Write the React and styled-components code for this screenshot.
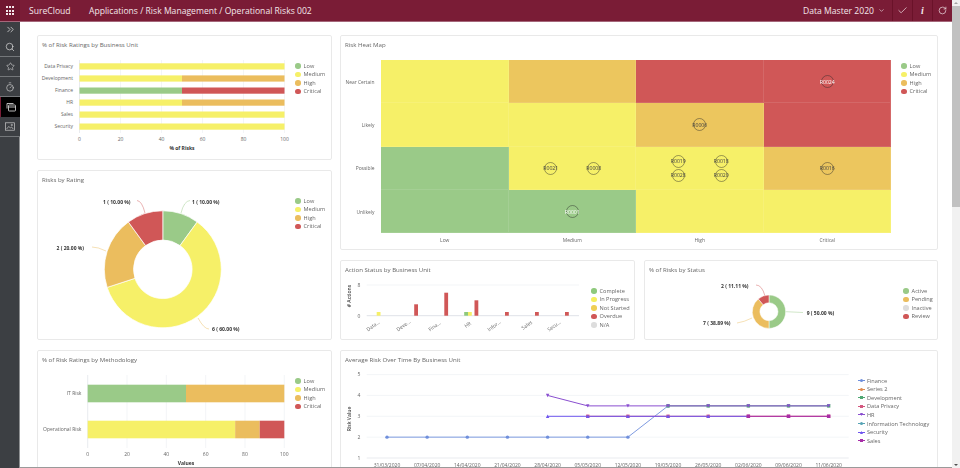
import React from "react";
import styled, { createGlobalStyle } from "styled-components";
import { Check, ChevronDown, ChevronsRight, RotateCw, Search, Star, Timer } from "lucide-react";

const GlobalStyle = createGlobalStyle`
  html, body {
    margin: 0;
    height: 100%;
    overflow: hidden;
    background: #fff;
    font-family: "Open Sans", "Liberation Sans", sans-serif;
  }
`;

const Page = styled.div`
  display: flex;
  width: 960px;
  height: 468px;
  overflow: hidden;
  filter: blur(0.3px);
`;

const Content = styled.div`
  display: flex;
  flex-direction: column;
  width: 952px;
`;

const Topbar = styled.header`
  display: flex;
  align-items: center;
  flex: 0 0 22px;
  background: #7a1c36;
  border-bottom: 1px solid #a5677a;
  box-sizing: border-box;
  color: #f3e6ea;
`;

const Waffle = styled.div`
  display: grid;
  grid-template-columns: repeat(3, 2px);
  gap: 1.2px;
  justify-content: center;
  align-content: center;
  width: 20px;
  height: 21px;
  background: #701730;
  span {
    background: #f3e6ea;
    height: 2px;
  }
`;

const Brand = styled.div`
  width: 59px;
  padding-left: 9px;
  font-size: 8.6px;
  box-sizing: border-box;
`;

const Crumbs = styled.div`
  flex: 1;
  padding-left: 10px;
  font-size: 8.6px;
`;

const Period = styled.div`
  display: flex;
  align-items: center;
  gap: 4px;
  width: 89px;
  font-size: 8.6px;
`;

const BarButton = styled.div`
  display: flex;
  align-items: center;
  justify-content: center;
  width: 20px;
  height: 21px;
  border-left: 1px solid #6a1229;
  box-sizing: border-box;
  font: italic 700 10px "Liberation Serif", serif;
`;

const Lower = styled.div`
  display: flex;
  flex: 1;
  min-height: 0;
`;

const Sidebar = styled.nav`
  display: flex;
  flex-direction: column;
  flex: 0 0 20px;
  background: #3c3f43;
  color: #e4e4e4;
`;

const SideItem = styled.div`
  display: flex;
  align-items: center;
  justify-content: center;
  height: ${(p) => p.$h || 20}px;
  border-bottom: ${(p) => (p.$plain ? "none" : "1px solid #74777a")};
  box-sizing: border-box;
  background: ${(p) => (p.$active ? "#000" : "transparent")};
  border-left: ${(p) => (p.$active ? "1.5px solid #7a1c36" : "none")};
`;

const SideFill = styled.div`
  flex: 1;
  border-right: 1px solid #8f9193;
`;

const Main = styled.main`
  display: grid;
  grid-template-columns: 295px 598px;
  column-gap: 8px;
  align-items: start;
  flex: 1;
  padding: 13px 0 0 17px;
  overflow: hidden;
  border-bottom: 1px solid #9a9a9a;
`;

const Column = styled.div`
  display: flex;
  flex-direction: column;
  gap: 10px;
`;

const Row = styled.div`
  display: flex;
  gap: 9px;
`;

const Card = styled.section`
  flex: 0 0 auto;
  width: ${(p) => p.$w || 295}px;
  height: ${(p) => p.$h}px;
  box-sizing: border-box;
  border: 1px solid #e9e9e9;
  border-radius: 2px;
  background: #fff;
`;

const Title = styled.h3`
  margin: 0;
  height: 19px;
  padding-left: 4px;
  font-size: 6.1px;
  font-weight: 400;
  line-height: 18px;
  color: #666;
`;

const Body = styled.div`
  display: flex;
  align-items: flex-start;
`;

const Legend = styled.ul`
  list-style: none;
  margin: 6.5px 0 0;
  padding: 0 0 0 ${(p) => p.$left || 2}px;
`;

const LegendRow = styled.li`
  display: flex;
  align-items: center;
  gap: ${(p) => p.$gap || 3}px;
  height: 8.55px;
  font-size: 5.6px;
  color: #666;
  white-space: nowrap;
`;

const Dot = styled.i`
  width: 5.6px;
  height: 5.6px;
  border-radius: 50%;
  background: ${(p) => p.$color};
`;

const HeatGrid = styled.div`
  display: grid;
  grid-template-columns: 40px repeat(4, 127.5px);
  grid-template-rows: repeat(4, 43.33px) 14px;
  margin-top: 5px;
  width: 550px;
  flex: 0 0 550px;
`;

const AxisLabel = styled.div`
  display: flex;
  align-items: center;
  justify-content: ${(p) => (p.$center ? "center" : "flex-end")};
  padding-right: ${(p) => (p.$center ? 0 : 6.5)}px;
  font-size: 4.9px;
  color: #666;
  white-space: nowrap;
`;

const Cell = styled.div`
  display: grid;
  grid-template-columns: repeat(${(p) => p.$cols}, 13px);
  column-gap: 30px;
  row-gap: 1px;
  justify-content: center;
  align-content: center;
  background: ${(p) => p.$color};
  box-shadow: inset -1px -1px 0 rgba(255, 255, 255, 0.1);
`;

const Marker = styled.div`
  display: flex;
  align-items: center;
  justify-content: center;
  width: 13px;
  height: 13px;
  box-sizing: border-box;
  border: 0.5px solid rgba(40, 40, 40, 0.45);
  border-radius: 50%;
  font-size: 5.2px;
  white-space: nowrap;
  color: ${(p) => (p.$light ? "#fff" : "#444")};
`;

const Scrollbar = styled.div`
  display: flex;
  flex-direction: column;
  align-items: center;
  flex: 0 0 8px;
  background: #f1f1f1;
`;

const Arrow = styled.i`
  width: 0;
  height: 0;
  margin: 2px 0;
  border-left: 2px solid transparent;
  border-right: 2px solid transparent;
  ${(p) => (p.$down ? "border-top: 2px solid #505050;" : "border-bottom: 2px solid #a3a3a3;")}
`;

const Thumb = styled.div`
  width: 100%;
  height: 201px;
  background: #c1c1c1;
`;

const Spacer = styled.div`
  flex: 1;
`;

const Chart = styled.svg`
  flex: 0 0 auto;
  display: block;
  overflow: hidden;
  text {
    font-family: "Open Sans", "Liberation Sans", sans-serif;
    font-size: 5px;
    fill: #666;
  }
  text.bold {
    font-weight: 700;
    fill: #333;
  }
  text.name {
    font-weight: 600;
    fill: #444;
  }
`;

const GREEN = "#9aca88";
const YELLOW = "#f6f068";
const AMBER = "#ebbd5e";
const RED = "#d05757";
const HEAT_AMBER = "#ecc65e";
const GRID = "#eef0f4";

const RATINGS = [
  ["Low", GREEN],
  ["Medium", YELLOW],
  ["High", AMBER],
  ["Critical", RED],
];

const Plot = ({ x, y, w, h, children }) => (
  <Chart width={w} height={h} viewBox={`${x} ${y} ${w} ${h}`}>
    {children}
  </Chart>
);

const KeyList = ({ items, left }) => (
  <Legend $left={left}>
    {items.map(([label, color]) => (
      <LegendRow key={label}>
        <Dot $color={color} />
        {label}
      </LegendRow>
    ))}
  </Legend>
);

const BarChart = ({ rows, scale, ticks, tickY, top, bottom, axisName, axisY, labelX }) => (
  <>
    {ticks.map((t) => (
      <g key={t}>
        <line x1={scale(t)} x2={scale(t)} y1={top} y2={bottom} stroke={t === 0 ? "#dfe2e8" : GRID} strokeWidth="0.7" />
        <text x={scale(t)} y={tickY} textAnchor="middle">
          {t}
        </text>
      </g>
    ))}
    {rows.map((r) => {
      let at = 0;
      return (
        <g key={r.name}>
          <text x={labelX} y={r.y + r.h / 2 + 1.7} textAnchor="end">
            {r.name}
          </text>
          {r.parts.map(([value, color], i) => {
            const from = at;
            at += value;
            return <rect key={i} x={scale(from)} y={r.y} width={scale(at) - scale(from)} height={r.h} fill={color} />;
          })}
        </g>
      );
    })}
    <text className="bold" x={scale(50)} y={axisY} textAnchor="middle">
      {axisName}
    </text>
  </>
);

const polar = (cx, cy, r, f) => {
  const a = f * 2 * Math.PI - Math.PI / 2;
  return [cx + r * Math.cos(a), cy + r * Math.sin(a)];
};

const Donut = ({ cx, cy, R, r, slices, gap = 0.7 }) => {
  let at = 0;
  return slices.map(([value, color]) => {
    const from = at;
    at += value;
    const [x0, y0] = polar(cx, cy, R, from);
    const [x1, y1] = polar(cx, cy, R, at);
    const [x2, y2] = polar(cx, cy, r, at);
    const [x3, y3] = polar(cx, cy, r, from);
    const big = value > 0.5 ? 1 : 0;
    return (
      <path
        key={color}
        d={`M${x0} ${y0}A${R} ${R} 0 ${big} 1 ${x1} ${y1}L${x2} ${y2}A${r} ${r} 0 ${big} 0 ${x3} ${y3}Z`}
        fill={color}
        stroke="#fff"
        strokeWidth={gap}
      />
    );
  });
};

const Leader = ({ d, color }) => <path d={d} fill="none" stroke={color} strokeWidth="0.7" opacity="0.65" />;

const heatRows = [
  { name: "Near Certain", cells: [[YELLOW], [HEAT_AMBER], [RED], [RED, ["R0024"], true]] },
  { name: "Likely", cells: [[YELLOW], [YELLOW], [HEAT_AMBER, ["R0006"]], [RED]] },
  {
    name: "Possible",
    cells: [
      [GREEN],
      [YELLOW, ["R0021", "R0008"]],
      [YELLOW, ["R0019", "R0018", "R0028", "R0020"]],
      [HEAT_AMBER, ["R0016"]],
    ],
  },
  { name: "Unlikely", cells: [[GREEN], [GREEN, ["R0001"], true], [YELLOW], [YELLOW]] },
];

const HeatMap = () => (
  <HeatGrid>
    {heatRows.map((row) => (
      <React.Fragment key={row.name}>
        <AxisLabel>{row.name}</AxisLabel>
        {row.cells.map(([color, risks = [], light], i) => (
          <Cell key={i} $color={color} $cols={Math.min(risks.length || 1, 2)}>
            {risks.map((id) => (
              <Marker key={id} $light={light}>
                {id}
              </Marker>
            ))}
          </Cell>
        ))}
      </React.Fragment>
    ))}
    <span />
    {["Low", "Medium", "High", "Critical"].map((name) => (
      <AxisLabel key={name} $center>
        {name}
      </AxisLabel>
    ))}
  </HeatGrid>
);

const actionBars = [
  { x: 376.7, top: 312, color: YELLOW },
  { x: 414.2, top: 304.3, color: RED },
  { x: 444.3, top: 292.7, color: RED },
  { x: 464.2, top: 312, color: "#8ec97c" },
  { x: 468, top: 312, color: YELLOW },
  { x: 474.5, top: 300.3, color: RED },
  { x: 505, top: 312, color: RED },
  { x: 535, top: 312, color: RED },
  { x: 565, top: 312, color: RED },
];

const actionNames = [
  ["Data...", 368, 331.5],
  ["Deve...", 398, 331.5],
  ["Fina...", 430, 331.5],
  ["HR", 466, 328],
  ["Infor...", 489, 331.5],
  ["Sales", 523, 330],
  ["Secu...", 549, 331.5],
];

const weekLabels = [
  "31/03/2020",
  "07/04/2020",
  "14/04/2020",
  "21/04/2020",
  "28/04/2020",
  "05/05/2020",
  "12/05/2020",
  "19/05/2020",
  "26/05/2020",
  "02/06/2020",
  "09/06/2020",
  "11/06/2020",
];

const weekX = (i) => 387 + i * 40.15;
const valueY = (v) => 458 - (v - 1) * 20.85;

const series = [
  { name: "Finance", color: "#6f8fdc", from: 0, values: [2, 2, 2, 2, 2, 2, 2, 3.5], shape: "circle" },
  { name: "Series 2", color: "#e08a4f", from: 0, values: [], shape: "circle" },
  { name: "Development", color: "#4fa873", from: 7, values: [3.5, 3.5, 3.5, 3.5, 3.5], shape: "square" },
  { name: "Data Privacy", color: "#d4587f", from: 5, values: [3, 3, 3, 3, 3, 3, 3], shape: "square" },
  { name: "HR", color: "#8a4fd0", from: 4, values: [4, 3.5, 3.5, 3.5, 3.5, 3.5, 3.5, 3.5], shape: "down" },
  { name: "Information Technology", color: "#56a3b5", from: 0, values: [], shape: "circle" },
  { name: "Security", color: "#6f55ee", from: 4, values: [3, 3, 3, 3, 3, 3], shape: "up" },
  { name: "Sales", color: "#a82ea8", from: 9, values: [3, 3, 3], shape: "square" },
];

// point marker of a line series, centred on x,y
const Point = ({ shape, x, y, color, size = 1.7 }) => {
  if (shape === "square") {
    return <rect x={x - size} y={y - size} width={size * 2} height={size * 2} fill={color} />;
  }
  if (shape === "down") {
    return <path d={`M${x - size} ${y - size}h${size * 2}L${x} ${y + size}Z`} fill={color} />;
  }
  if (shape === "up") {
    return <path d={`M${x - size} ${y + size}h${size * 2}L${x} ${y - size}Z`} fill={color} />;
  }
  return <circle cx={x} cy={y} r={size} fill={color} />;
};

const LineChart = () => (
  <Plot x={341} y={370} w={515} h={97}>
    {[5, 4, 3, 2, 1].map((v) => (
      <g key={v}>
        <line x1="366.7" x2="848.7" y1={valueY(v)} y2={valueY(v)} stroke={v === 1 ? "#dfe2e8" : GRID} strokeWidth="0.7" />
        <text x="359" y={valueY(v) + 1.7} textAnchor="middle">
          {v}
        </text>
      </g>
    ))}
    <text className="name" transform="translate(350.5 419) rotate(-90)" textAnchor="middle">
      Risk Value
    </text>
    {weekLabels.map((label, i) => (
      <text key={label} x={weekX(i)} y="467" textAnchor="middle">
        {label}
      </text>
    ))}
    {series
      .filter((s) => s.values.length)
      .map((s) => (
        <g key={s.name}>
          <polyline
            points={s.values.map((v, i) => `${weekX(s.from + i)},${valueY(v)}`).join(" ")}
            fill="none"
            stroke={s.color}
            strokeWidth={s.name === "Finance" ? 0.9 : 1}
          />
          {s.values.map((v, i) => (
            <Point key={i} shape={s.shape} x={weekX(s.from + i)} y={valueY(v)} color={s.color} />
          ))}
        </g>
      ))}
  </Plot>
);

const LineKey = ({ shape, color }) => (
  <svg width="7" height="5" viewBox="0 0 7 5">
    <line x1="0" x2="7" y1="2.5" y2="2.5" stroke={color} strokeWidth="1" />
    <Point shape={shape} x={3.5} y={2.5} color={color} size={1.5} />
  </svg>
);

const WindowsIcon = () => (
  <svg width="10" height="10" viewBox="0 0 10 10" fill="none" stroke="#e4e4e4" strokeWidth="0.8">
    <path d="M1 6.5V1.5h6.5" />
    <rect x="2.5" y="3" width="7" height="6" rx="0.6" />
    <path d="M2.5 5h7" />
  </svg>
);

const PictureIcon = () => (
  <svg width="10" height="9" viewBox="0 0 10 9" fill="none" stroke="#c9c9c9" strokeWidth="0.7">
    <rect x="0.6" y="0.8" width="8.8" height="7.4" />
    <path d="M1.6 7l2.2-2.6 1.6 1.6 1.2-1 1.6 2" />
    <circle cx="6.8" cy="3" r="0.7" />
  </svg>
);

export default function App() {
  return (
    <Page>
      <GlobalStyle />
      <Content>
        <Topbar>
          <Waffle>
            {Array.from({ length: 9 }, (_, i) => (
              <span key={i} />
            ))}
          </Waffle>
          <Brand>SureCloud</Brand>
          <Crumbs>Applications / Risk Management / Operational Risks 002</Crumbs>
          <Period>
            Data Master 2020
            <ChevronDown size={7} />
          </Period>
          <BarButton>
            <Check size={11} strokeWidth={1.5} />
          </BarButton>
          <BarButton>i</BarButton>
          <BarButton>
            <RotateCw size={9} strokeWidth={1.8} />
          </BarButton>
        </Topbar>
        <Lower>
          <Sidebar>
            <SideItem $h={15} $plain>
              <ChevronsRight size={11} strokeWidth={1.6} />
            </SideItem>
            <SideItem $h={20}>
              <Search size={10} strokeWidth={1.6} />
            </SideItem>
            <SideItem>
              <Star size={9} strokeWidth={1.4} />
            </SideItem>
            <SideItem>
              <Timer size={10} strokeWidth={1.4} />
            </SideItem>
            <SideItem $active $plain>
              <WindowsIcon />
            </SideItem>
            <SideItem>
              <PictureIcon />
            </SideItem>
            <SideFill />
          </Sidebar>
          <Main>
            <Column>
              <Card $h={125}>
                <Title>% of Risk Ratings by Business Unit</Title>
                <Body>
                  <Plot x={38} y={55} w={255} h={104}>
                    <BarChart
                      scale={(v) => 79.5 + v * 2.05}
                      ticks={[0, 20, 40, 60, 80, 100]}
                      tickY={141}
                      top={60}
                      bottom={133}
                      labelX={73}
                      axisName="% of Risks"
                      axisY={150}
                      rows={[
                        { name: "Data Privacy", y: 63.3, h: 6.2, parts: [[100, YELLOW]] },
                        { name: "Development", y: 75.4, h: 6.2, parts: [[50, YELLOW], [50, AMBER]] },
                        { name: "Finance", y: 87.5, h: 6.2, parts: [[50, GREEN], [50, RED]] },
                        { name: "HR", y: 99.5, h: 6.2, parts: [[50, YELLOW], [50, AMBER]] },
                        { name: "Sales", y: 111.5, h: 6.2, parts: [[100, YELLOW]] },
                        { name: "Security", y: 123.5, h: 6.2, parts: [[100, YELLOW]] },
                      ]}
                    />
                  </Plot>
                  <KeyList items={RATINGS} />
                </Body>
              </Card>
              <Card $h={170}>
                <Title>Risks by Rating</Title>
                <Body>
                  <Plot x={38} y={190} w={255} h={149}>
                    <Leader d="M181 213Q184 201 190 200.5" color={GREEN} />
                    <Leader d="M145 213Q142 201 137 200.5" color={RED} />
                    <Leader d="M106 251Q98 247 92 247" color={AMBER} />
                    <Leader d="M198 318Q204 329 209 329" color={AMBER} />
                    <Donut
                      cx={162.8}
                      cy={269.3}
                      R={58.5}
                      r={29.3}
                      slices={[[0.1, GREEN], [0.6, YELLOW], [0.2, AMBER], [0.1, RED]]}
                    />
                    <text className="bold" x="192" y="203.5">1 ( 10.00 %)</text>
                    <text className="bold" x="103" y="203.5">1 ( 10.00 %)</text>
                    <text className="bold" x="56.5" y="249.5">2 ( 20.00 %)</text>
                    <text className="bold" x="212" y="330.5">6 ( 60.00 %)</text>
                  </Plot>
                  <KeyList items={RATINGS} />
                </Body>
              </Card>
              <Card $h={200}>
                <Title>% of Risk Ratings by Methodology</Title>
                <Body>
                  <Plot x={38} y={370} w={255} h={97}>
                    <BarChart
                      scale={(v) => 87.7 + v * 1.966}
                      ticks={[0, 20, 40, 60, 80, 100]}
                      tickY={456}
                      top={375}
                      bottom={448}
                      labelX={81.5}
                      axisName="Values"
                      axisY={465}
                      rows={[
                        { name: "IT Risk", y: 384.7, h: 17.6, parts: [[50, GREEN], [50, AMBER]] },
                        { name: "Operational Risk", y: 420.7, h: 17.6, parts: [[75, YELLOW], [12.5, AMBER], [12.5, RED]] },
                      ]}
                    />
                  </Plot>
                  <KeyList items={RATINGS} />
                </Body>
              </Card>
            </Column>
            <Column>
              <Card $w={598} $h={215}>
                <Title>Risk Heat Map</Title>
                <Body>
                  <HeatMap />
                  <KeyList items={RATINGS} left={10} />
                </Body>
              </Card>
              <Row>
                <Card $h={80}>
                  <Title>Action Status by Business Unit</Title>
                  <Body>
                    <Plot x={341} y={280} w={248} h={59}>
                      <line x1="366.7" x2="579" y1="285" y2="285" stroke={GRID} strokeWidth="0.7" />
                      <line x1="366.7" x2="579" y1="315.7" y2="315.7" stroke="#dfe2e8" strokeWidth="1" />
                      <text x="359" y="286.8" textAnchor="middle">8</text>
                      <text x="359" y="317.5" textAnchor="middle">0</text>
                      <text className="name" transform="translate(351 296) rotate(-90)" textAnchor="middle">
                        # Actions
                      </text>
                      {actionBars.map((b) => (
                        <rect key={`${b.x}`} x={b.x} y={b.top} width="3.8" height={315.7 - b.top} fill={b.color} />
                      ))}
                      {actionNames.map(([name, x, y]) => (
                        <text key={name} transform={`translate(${x} ${y}) rotate(-35)`}>
                          {name}
                        </text>
                      ))}
                    </Plot>
                    <KeyList
                      items={[
                        ["Complete", "#8ec97c"],
                        ["In Progress", "#f5ef5e"],
                        ["Not Started", "#efcf55"],
                        ["Overdue", RED],
                        ["N/A", "#dddddd"],
                      ]}
                    />
                  </Body>
                </Card>
                <Card $w={294} $h={80}>
                  <Title>% of Risks by Status</Title>
                  <Body>
                    <Plot x={645} y={280} w={256} h={59}>
                      <Leader d="M765 296Q762 285 756 285" color={RED} />
                      <Leader d="M752 318Q744 322 737 323" color={AMBER} />
                      <Leader d="M786 311.7L803 312.5" color={GREEN} />
                      <Donut
                        cx={769}
                        cy={311.7}
                        R={16.7}
                        r={9}
                        gap={0.5}
                        slices={[[0.5, GREEN], [0.3889, AMBER], [0.1111, RED]]}
                      />
                      <text className="bold" x="721" y="287.8">2 ( 11.11 %)</text>
                      <text className="bold" x="703" y="324.8">7 ( 38.89 %)</text>
                      <text className="bold" x="806.7" y="314.8">9 ( 50.00 %)</text>
                    </Plot>
                    <KeyList
                      items={[
                        ["Active", GREEN],
                        ["Pending", AMBER],
                        ["Inactive", "#dddddd"],
                        ["Review", RED],
                      ]}
                    />
                  </Body>
                </Card>
              </Row>
              <Card $w={598} $h={200}>
                <Title>Average Risk Over Time By Business Unit</Title>
                <Body>
                  <LineChart />
                  <Legend $left={1.5}>
                    {series.map((s) => (
                      <LegendRow key={s.name} $gap={2.5}>
                        <LineKey shape={s.shape} color={s.color} />
                        {s.name}
                      </LegendRow>
                    ))}
                  </Legend>
                </Body>
              </Card>
            </Column>
          </Main>
        </Lower>
      </Content>
      <Scrollbar>
        <Arrow />
        <Thumb />
        <Spacer />
        <Arrow $down />
      </Scrollbar>
    </Page>
  );
}
